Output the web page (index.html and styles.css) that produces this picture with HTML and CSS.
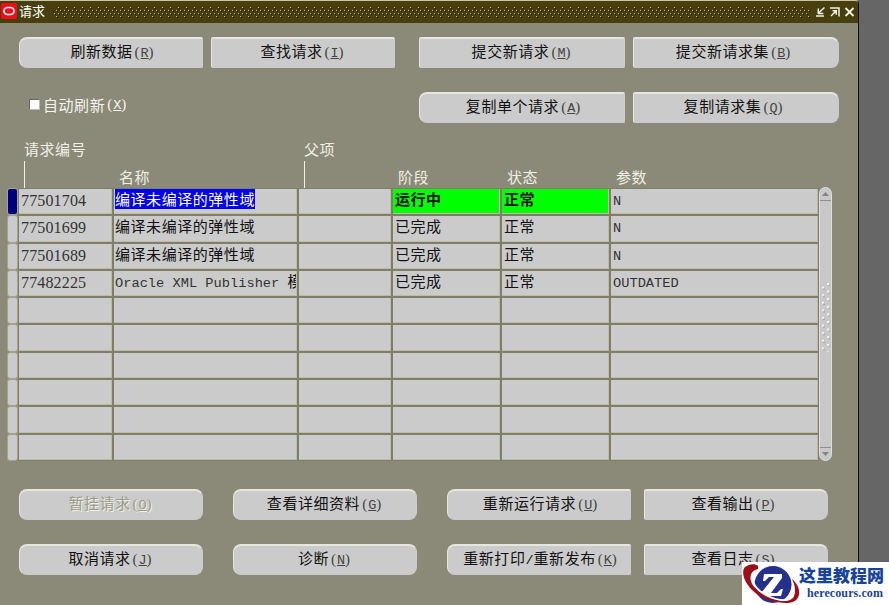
FILE: index.html
```
<!DOCTYPE html>
<html lang="zh-CN">
<head>
    <meta charset="UTF-8">
    <meta name="viewport" content="width=device-width, initial-scale=1.0">
    <title>请求</title>
    <link rel="stylesheet" href="styles.css">
</head>
<body>
    <div class="window">
        <!-- Titelbalk -->
        <div class="titlebar">
            <svg class="logo" width="16" height="16" viewBox="0 0 16 16">
                <rect width="16" height="16" rx="2" fill="#f80b16"/>
                <rect x="3" y="4.500" width="10" height="7" rx="3.500" fill="none" stroke="#fff" stroke-width="1.7"/>
            </svg>
            <span class="title">请求</span>
            <svg class="grip" width="757" height="11">
                <defs>
                    <pattern id="dots" width="8" height="11" patternUnits="userSpaceOnUse">
                        <path d="M5 0h1v1h-1zM3 3h1v1h-1zM7 3h1v1h-1zM1 6h1v1h-1zM5 6h1v1h-1zM3 9h1v1h-1z" fill="#c3bb82"/>
                        <path d="M6 1h1v1h-1zM4 4h1v1h-1zM0 4h1v1h-1zM2 7h1v1h-1zM6 7h1v1h-1zM4 10h1v1h-1z" fill="#211c02"/>
                    </pattern>
                </defs>
                <rect width="757" height="11" fill="url(#dots)"/>
            </svg>
            <svg class="controls" width="40" height="12" viewBox="0 0 40 12" fill="none" stroke="#f4f2e4" stroke-width="1.5">
                <path d="M9.500 1.500L4 6.500M3.300 2.500v5h5M1 10h8"/>
                <path d="M15 2h9v8.500M16 10l5-5M17.500 4.800h3.800v4"/>
                <path d="M30.500 2l8 8M38.500 2l-8 8" stroke-width="1.8"/>
            </svg>
        </div>

        <!-- Knoppen boven -->
        <div class="top-buttons">
            <button class="btn round-left">刷新数据<span class="key">(<u>R</u>)</span></button>
            <button class="btn">查找请求<span class="key">(<u>I</u>)</span></button>
            <button class="btn col-3">提交新请求<span class="key">(<u>M</u>)</span></button>
            <button class="btn round-right">提交新请求集<span class="key">(<u>B</u>)</span></button>
            <label class="auto"><i class="box"></i>自动刷新<span class="key">(<u>X</u>)</span></label>
            <button class="btn round-left col-3">复制单个请求<span class="key">(<u>A</u>)</span></button>
            <button class="btn round-right">复制请求集<span class="key">(<u>Q</u>)</span></button>
        </div>

        <!-- Kolomkoppen -->
        <div class="headings">
            <span></span>
            <span class="high">请求编号</span>
            <span class="low">名称</span>
            <span class="high">父项</span>
            <span class="low">阶段</span>
            <span class="low">状态</span>
            <span class="low">参数</span>
        </div>

        <div class="grid-area">
            <div class="grid">
                <i class="mark current"></i><div class="num">77501704</div><div class="name"><span class="selected">编译未编译的弹性域</span></div><div></div><div class="running">运行中</div><div class="running">正常</div><div class="latin">N</div>
                <i class="mark"></i><div class="num">77501699</div><div class="name">编译未编译的弹性域</div><div></div><div>已完成</div><div>正常</div><div class="latin">N</div>
                <i class="mark"></i><div class="num">77501689</div><div class="name">编译未编译的弹性域</div><div></div><div>已完成</div><div>正常</div><div class="latin">N</div>
                <i class="mark"></i><div class="num">77482225</div><div class="name"><span class="latin">Oracle XML Publisher </span>模</div><div></div><div>已完成</div><div>正常</div><div class="latin">OUTDATED</div>
                <i class="mark"></i><div></div><div></div><div></div><div></div><div></div><div></div>
                <i class="mark"></i><div></div><div></div><div></div><div></div><div></div><div></div>
                <i class="mark"></i><div></div><div></div><div></div><div></div><div></div><div></div>
                <i class="mark"></i><div></div><div></div><div></div><div></div><div></div><div></div>
                <i class="mark"></i><div></div><div></div><div></div><div></div><div></div><div></div>
                <i class="mark"></i><div></div><div></div><div></div><div></div><div></div><div></div>
            </div>
            <div class="scrollbar">
                <div class="arrow up"><svg width="7" height="4"><path d="M0 4l3.500-4 3.500 4z" fill="#85857f"/></svg></div>
                <svg class="ridges" width="9" height="70">
                    <defs>
                        <pattern id="bumps" width="9" height="7.600" patternUnits="userSpaceOnUse">
                            <path d="M6 1h2v2h-2zM1 4.500h2v2h-2z" fill="#f6f6f4"/>
                            <path d="M7 3h2v1h-2zM2 6.500h2v1h-2z" fill="#a5a5a0"/>
                        </pattern>
                    </defs>
                    <rect width="9" height="70" fill="url(#bumps)"/>
                </svg>
                <div class="arrow down"><svg width="7" height="4"><path d="M0 0h7l-3.500 4z" fill="#85857f"/></svg></div>
            </div>
        </div>

        <!-- Knoppen onder -->
        <div class="bottom-buttons">
            <button class="btn round disabled" disabled>暂挂请求<span class="key">(<u>O</u>)</span></button>
            <button class="btn round">查看详细资料<span class="key">(<u>G</u>)</span></button>
            <button class="btn round-left">重新运行请求<span class="key">(<u>U</u>)</span></button>
            <button class="btn round-right">查看输出<span class="key">(<u>P</u>)</span></button>
            <button class="btn round">取消请求<span class="key">(<u>J</u>)</span></button>
            <button class="btn round">诊断<span class="key">(<u>N</u>)</span></button>
            <button class="btn round-left">重新打印<span class="slash">/</span>重新发布<span class="key">(<u>K</u>)</span></button>
            <button class="btn round-right">查看日志<span class="key">(<u>S</u>)</span></button>
        </div>
    </div>

    <!-- Watermerk over de hoek -->
    <div class="watermark">
        <svg width="58" height="43" viewBox="0 0 58 43">
            <circle cx="31" cy="22.500" r="18.500" fill="#25308c"/>
            <path d="M22 12h18v4L29 31h6l4-4h2l-2 7H19v-3l13-16h-5l-4 4h-2z" fill="#fff"/>
            <path d="M15 5C5 12 10 26 25 34C40 41 54 39 55 31C56 27 54 22 51 18" fill="none" stroke="#fff" stroke-width="2"/>
            <path d="M16 7C6 9 5 22 19 31C33 40 49 42 52 34C54 29 53 23 50 17C56 22 60 31 55 37C50 44 31 41 18 34C3 25-2 10 3 5C7 2 13 1 16 4z" fill="#9b1018"/>
        </svg>
        <div class="brand">
            <span class="brand-name">这里教程网</span>
            <span class="brand-url">herecours.com</span>
        </div>
    </div>
</body>
</html>
```
FILE: styles.css
```
body {
    margin: 0;
    height: 605px;
    overflow: hidden;
    background: #666666;
    font-family: "Noto Sans CJK SC", sans-serif;
    font-size: 15px;
    letter-spacing: 0.55px;
    color: #111;
}
.window {
    box-sizing: border-box;
    width: 859px;
    height: 605px;
    background: #8b8a78;
    border-top: 1px solid #c9c6a6;
    border-right: 1px solid #111;
    border-top-right-radius: 4px;
}
.titlebar {
    display: flex;
    align-items: center;
    box-sizing: border-box;
    height: 22px;
    background: #483f0e;
    border-top-right-radius: 3px;
    color: #fff;
}
.logo {
    margin: 0 2px 2px 1px;
}
.title {
    width: 34px;
    font-size: 13px;
    letter-spacing: 0;
    line-height: 18px;
    margin-bottom: 2px;
}
.controls {
    margin-left: 5px;
}
.btn {
    box-sizing: border-box;
    height: 31px;
    padding: 0 0 2px;
    border: 1px solid #cbcbcb;
    border-top: 2px solid #e6e6df;
    border-left-color: #e6e6df;
    border-radius: 2px;
    background: #cbcbcb;
    font: inherit;
    letter-spacing: inherit;
    line-height: 24px;
    color: #111;
    white-space: nowrap;
}
.round {
    border-radius: 8px;
}
.round-left {
    padding-left: 4px;
    border-radius: 8px 2px 2px 8px;
}
.round-right {
    padding-right: 4px;
    border-radius: 2px 8px 8px 2px;
}
.disabled {
    color: #9c9b8a;
    text-shadow: 1px 1px 0 #f0f0e8;
}
.key {
    padding: 0 1px 0 2px;
    font-family: "Liberation Serif", serif;
    font-size: 15px;
    letter-spacing: 1px;
    color: #444;
}
.disabled .key {
    color: inherit;
}
.key u {
    display: inline-block;
    width: 8px;
    font-family: "Liberation Mono", monospace;
    font-size: 13.5px;
    letter-spacing: 0;
    text-underline-offset: 1px;
}
.slash {
    font-family: "Liberation Mono", monospace;
    font-size: 13.5px;
    letter-spacing: 0;
}
.top-buttons {
    display: grid;
    grid-template-columns: 184px 184px 206px 206px;
    column-gap: 8px;
    row-gap: 24px;
    padding: 14px 0 0 19px;
}
.col-3 {
    grid-column: 3;
    margin-left: 16px;
    margin-right: -16px;
}
.col-3 + .btn {
    margin-left: 16px;
    margin-right: -16px;
}
.auto {
    display: flex;
    align-items: center;
    padding: 0 0 6px 10px;
    color: #f5f5ee;
}
.auto .key {
    color: #f5f5ee;
}
.box {
    box-sizing: border-box;
    width: 11px;
    height: 11px;
    margin-right: 3px;
    border: 1px solid #6c6b5a;
    border-right-color: #bbb;
    border-bottom-color: #bbb;
    background: #fff;
}
.headings {
    display: grid;
    grid-template-columns: 10px 93px 183px 92px 107px 107px 207px;
    column-gap: 2px;
    height: 52px;
    padding: 14px 0 0 7px;
    color: #f0f0e6;
}
.headings span {
    padding-left: 5px;
    line-height: 24px;
}
.headings .high::after {
    content: "";
    display: block;
    width: 1px;
    height: 27px;
    background: #f0f0e6;
}
.headings .low {
    padding-top: 28px;
}
.grid-area {
    display: flex;
    padding-left: 7px;
}
.grid {
    display: grid;
    grid-template-columns: 10px 93px 183px 92px 107px 107px 207px;
    grid-template-rows: repeat(10, 27.3px);
    column-gap: 2px;
}
.grid div {
    box-sizing: border-box;
    margin-bottom: 2px;
    padding-left: 2px;
    overflow: hidden;
    background: #cbcbcb;
    border-right: 1px solid #bdbca5;
    border-bottom: 1px solid #bdbca5;
    box-shadow: 0 0 0 1px #7f7e69;
    line-height: 20px;
    white-space: nowrap;
}
.grid .name {
    padding-left: 1px;
}
.mark {
    margin: 0 0 2px 1px;
    border-radius: 2px;
    background: #cbcbcb;
    box-shadow: 0 0 0 1px #a3a28f;
}
.mark.current {
    background: #00007f;
}
.selected {
    display: block;
    width: 140px;
    height: 20px;
    background: #0000f0;
    color: #fff;
}
.grid .running {
    background: #00ff00;
    font-weight: bold;
}
.grid .num {
    font-family: "Liberation Serif", serif;
    font-size: 16px;
    letter-spacing: 0.15px;
    line-height: 24px;
    color: #333;
}
.grid .latin {
    font-family: "Liberation Mono", monospace;
    font-size: 13.7px;
    letter-spacing: 0;
    line-height: 25px;
    color: #333;
}
.scrollbar {
    display: flex;
    flex-direction: column;
    align-items: center;
    justify-content: space-between;
    box-sizing: border-box;
    width: 13px;
    height: 274px;
    margin: -2px 0 0 1px;
    border: 1px solid #dededa;
    border-radius: 7px;
    background: #c8c8c8;
}
.arrow {
    display: flex;
    align-items: center;
    justify-content: center;
    width: 11px;
    height: 12px;
}
.up {
    border-bottom: 1px solid #8e8e86;
}
.down {
    border-top: 1px solid #8e8e86;
}
.ridges {
    margin-bottom: 14px;
}
.bottom-buttons {
    display: grid;
    grid-template-columns: 184px 184px 184px 184px;
    column-gap: 30px;
    row-gap: 24px;
    padding: 27px 0 0 19px;
}
.bottom-buttons .btn:nth-child(4n) {
    margin-left: -17px;
    margin-right: 17px;
}
.watermark {
    position: absolute;
    left: 742px;
    top: 562px;
    display: flex;
    width: 147px;
    height: 43px;
    background: #fff;
    color: #17449a;
}
.brand {
    display: flex;
    flex-direction: column;
    white-space: nowrap;
}
.brand-name {
    margin-left: -1px;
    font-size: 17px;
    font-weight: 900;
    letter-spacing: 0;
    line-height: 25px;
}
.brand-url {
    margin-left: 7px;
    font-family: "Liberation Serif", serif;
    font-size: 12px;
    font-weight: bold;
    letter-spacing: 0.1px;
    line-height: 13px;
}
```
